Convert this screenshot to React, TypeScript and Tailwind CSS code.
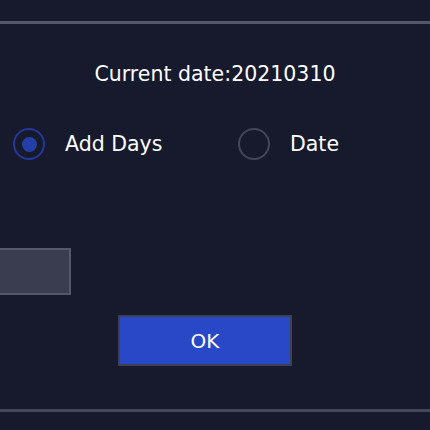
import React from "react"

const font = { fontFamily: "Tahoma, 'DejaVu Sans', 'Noto Sans', sans-serif" }

function Radio({ checked, label }: { checked?: boolean; label: string }) {
  return (
    <label className="flex items-center gap-[20px]">
      <span
        className={`flex items-center justify-center w-[32px] h-[32px] rounded-full border-2 ${
          checked ? "border-[#22389a]" : "border-[#44475a]"
        }`}
      >
        {checked && <span className="w-[15px] h-[15px] rounded-full bg-[#2440a8]" />}
      </span>
      <span className="text-[20.5px] text-white leading-none">{label}</span>
    </label>
  )
}

export default function App() {
  return (
    <div className="w-[430px] h-[430px] overflow-hidden bg-[#161a2c] flex flex-col" style={font}>
      <div className="mt-[21px] h-[3px] bg-[#555869]" />

      <div className="mt-[40px] h-[21px] text-center text-white text-[20.5px] leading-none">Current date:20210310</div>

      <div className="mt-[43px] flex pl-[13px]">
        <div className="w-[225px]">
          <Radio checked label="Add Days" />
        </div>
        <Radio label="Date" />
      </div>

      {/* days input, cut off on the left */}
      <div className="mt-[88px] -ml-[130px] w-[201px] h-[47px] shrink-0 border-2 border-[#55586a] bg-[#3a3d4f]" />

      <div className="mt-[20px] flex justify-center pr-[20px]">
        <button className="w-[174px] h-[51px] border-2 border-[#3e4152] bg-[#2848c8] text-white text-[20px] leading-none">
          OK
        </button>
      </div>

      <div className="mt-[43px] h-[3px] bg-[#454859]" />
    </div>
  )
}
